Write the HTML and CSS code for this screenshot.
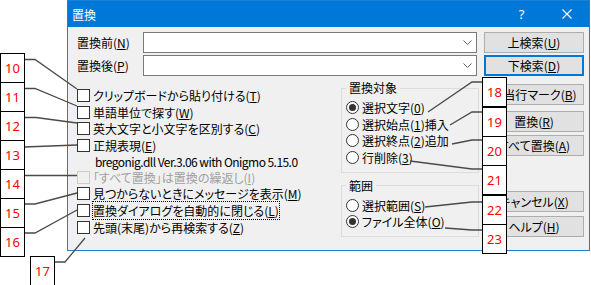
FILE: index.html
```html
<!DOCTYPE html>
<html lang="ja">
<head>
<meta charset="utf-8">
<title>置換</title>
<link rel="stylesheet" href="styles.css">
</head>
<body>
<div class="dialog">
  <div class="titlebar">
    <span class="title">置換</span>
    <span class="tb-help">?</span>
    <span class="tb-close"><svg width="10" height="10" viewBox="0 0 10 10"><path d="M0.5 0.5L9.5 9.5M9.5 0.5L0.5 9.5" stroke="#fff" stroke-width="1.1" fill="none"/></svg></span>
  </div>
  <div class="content">
    <div class="top">
      <span class="flabel">置換前(<u>N</u>)</span>
      <div class="combo"><svg class="chev" width="9" height="5" viewBox="0 0 9 5"><path d="M0.5 0.5L4.5 4.5L8.5 0.5" stroke="#606060" fill="none"/></svg></div>
      <button class="btn">上検索(<u>U</u>)</button>
      <span class="flabel">置換後(<u>P</u>)</span>
      <div class="combo"><svg class="chev" width="9" height="5" viewBox="0 0 9 5"><path d="M0.5 0.5L4.5 4.5L8.5 0.5" stroke="#606060" fill="none"/></svg></div>
      <button class="btn default">下検索(<u>D</u>)</button>
    </div>
    <div class="lower">
      <div class="checks">
        <div class="chk"><span class="box"></span>クリップボードから貼り付ける(<u>T</u>)</div>
        <div class="chk"><span class="box"></span>単語単位で探す(<u>W</u>)</div>
        <div class="chk"><span class="box"></span>英大文字と小文字を区別する(<u>C</u>)</div>
        <div class="chk"><span class="box"></span>正規表現(<u>E</u>)</div>
        <div class="info">bregonig.dll Ver.3.06 with Onigmo 5.15.0</div>
        <div class="chk disabled"><span class="box"></span>「すべて置換」は置換の繰返し(<u>I</u>)</div>
        <div class="chk"><span class="box"></span>見つからないときにメッセージを表示(<u>M</u>)</div>
        <div class="chk"><span class="box"></span><span class="focus">置換ダイアログを自動的に閉じる(<u>L</u>)</span></div>
        <div class="chk"><span class="box"></span>先頭(末尾)から再検索する(<u>Z</u>)</div>
      </div>
      <div class="groups">
        <fieldset class="group">
          <legend>置換対象</legend>
          <div class="rad"><span class="dot on"></span>選択文字(<u>0</u>)</div>
          <div class="rad"><span class="dot"></span>選択始点(<u>1</u>)挿入</div>
          <div class="rad"><span class="dot"></span>選択終点(<u>2</u>)追加</div>
          <div class="rad"><span class="dot"></span>行削除(<u>3</u>)</div>
        </fieldset>
        <fieldset class="group second">
          <legend>範囲</legend>
          <div class="rad"><span class="dot"></span>選択範囲(<u>S</u>)</div>
          <div class="rad"><span class="dot on"></span>ファイル全体(<u>O</u>)</div>
        </fieldset>
      </div>
      <div class="buttons">
        <button class="btn b-mark">該当行マーク(<u>B</u>)</button>
        <button class="btn b-rep">置換(<u>R</u>)</button>
        <button class="btn b-all">すべて置換(<u>A</u>)</button>
        <button class="btn b-cancel">キャンセル(<u>X</u>)</button>
        <button class="btn b-help">ヘルプ(<u>H</u>)</button>
      </div>
    </div>
  </div>
</div>

<div class="annot">
  <svg class="leaders" width="591" height="285" viewBox="0 0 591 285">
    <g stroke="#4a4a4a" stroke-width="1.3" fill="none">
      <polyline points="24,59.5 35,59.5 77,89"/>
      <polyline points="24,88.5 35,88.5 77,106"/>
      <polyline points="24,117.5 36,117.5 77,123"/>
      <polyline points="24,147 77,145"/>
      <polyline points="24,175.5 77,175.5"/>
      <polyline points="24,204 35,204 77,193"/>
      <polyline points="24,233 35,233 77,210"/>
      <polyline points="54,262 65,262 85,238"/>
      <polyline points="428,112 472,82 482,82"/>
      <polyline points="450,125 472,112 482,112"/>
      <polyline points="452,144 472,140 482,140"/>
      <polyline points="410,161 472,169 482,169"/>
      <polyline points="425,207 472,202 482,202"/>
      <polyline points="445,228 472,230 482,230"/>
    </g>
  </svg>
  <div class="tag t10">10</div>
  <div class="tag t11">11</div>
  <div class="tag t12">12</div>
  <div class="tag t13">13</div>
  <div class="tag t14">14</div>
  <div class="tag t15">15</div>
  <div class="tag t16">16</div>
  <div class="tag t17">17</div>
  <div class="tag t18">18</div>
  <div class="tag t19">19</div>
  <div class="tag t20">20</div>
  <div class="tag t21">21</div>
  <div class="tag t22">22</div>
  <div class="tag t23">23</div>
</div>
</body>
</html>
```

FILE: styles.css
```css
* { box-sizing: border-box; }

body {
  margin: 0;
  width: 591px;
  height: 285px;
  position: relative;
  overflow: hidden;
  background: #fff;
  color: #000;
  font-family: "Noto Sans CJK JP", "Noto Sans", sans-serif;
  font-size: 12px;
  font-feature-settings: "palt";
}

u { text-decoration: underline; text-underline-offset: 1px; }

.dialog {
  margin-left: 67px;
  width: 523px;
  height: 251px;
  border: 1px solid #1c7fd6;
  background: #f0f0f0;
}

.titlebar {
  height: 26px;
  background: #0078d7;
  color: #fff;
  display: flex;
  align-items: center;
}
.title { padding-left: 4px; flex: 1; }
.tb-help, .tb-close {
  width: 45px;
  display: flex;
  justify-content: center;
  align-items: center;
}
.tb-help { font-family: "Noto Sans", sans-serif; font-size: 13px; }

.content { padding: 5px 0 0 9px; }

.top {
  display: grid;
  grid-template-columns: 66px 334px 107px;
  grid-template-rows: 21px 21px;
  row-gap: 2px;
  align-items: center;
}
.top .btn { justify-self: end; }
.combo {
  height: 21px;
  border: 1px solid #7a7a7a;
  background: #fff;
  display: flex;
  justify-content: flex-end;
  align-items: center;
  padding-right: 4px;
}

.btn {
  font: inherit;
  color: #000;
  height: 21px;
  width: 100px;
  padding: 0;
  background: #e1e1e1;
  border: 1px solid #adadad;
  display: flex;
  justify-content: center;
  align-items: center;
}
.btn.default { border: 2px solid #0078d7; }

.lower { display: flex; align-items: flex-start; }

.checks { width: 264px; padding-top: 11px; }
.chk {
  height: 16.7px;
  display: flex;
  align-items: center;
  white-space: nowrap;
}
.box {
  width: 13px;
  height: 13px;
  border: 1px solid #333;
  background: #fff;
  margin-right: 3px;
  flex: none;
}
.chk.disabled { color: #a0a0a0; }
.chk.disabled .box { border-color: #cccccc; background: #f0f0f0; }
.focus { outline: 1px dotted #000; outline-offset: 0; }

.info {
  height: 15px;
  line-height: 15px;
  padding-left: 18px;
  white-space: nowrap;
  letter-spacing: -0.55px;
}

.groups { width: 138px; padding-top: 5px; }
.group {
  margin: 0;
  min-width: 0;
  border: 1px solid #dcdcdc;
  padding: 4px 4px 6px 4px;
}
.group legend {
  padding: 0 3px;
  line-height: 14px;
}
.group.second { margin-top: 6px; }
.rad {
  height: 16.7px;
  display: flex;
  align-items: center;
  white-space: nowrap;
}
.dot {
  width: 13px;
  height: 13px;
  border: 1px solid #333;
  border-radius: 50%;
  background: #fff;
  margin-right: 3px;
  flex: none;
  display: flex;
  justify-content: center;
  align-items: center;
}
.dot.on::after {
  content: "";
  width: 7px;
  height: 7px;
  border-radius: 50%;
  background: #333;
}

.buttons {
  margin-left: 5px;
  width: 100px;
  padding-top: 8px;
  display: flex;
  flex-direction: column;
}
.b-rep { margin-top: 6px; }
.b-all { margin-top: 3px; }
.b-cancel { margin-top: 35px; }
.b-help { margin-top: 4px; }

.annot { position: absolute; left: 0; top: 0; width: 591px; height: 285px; }
.leaders { position: absolute; left: 0; top: 0; }
.tag {
  position: absolute;
  width: 25px;
  height: 30px;
  border: 1px solid #000;
  background: #fff;
  color: #ff0000;
  font-family: "Noto Sans", sans-serif;
  font-size: 13px;
  display: flex;
  justify-content: center;
  align-items: center;
}
.t10 { left: 0; top: 53px; }
.t11 { left: 0; top: 82px; }
.t12 { left: 0; top: 111px; }
.t13 { left: 0; top: 140px; }
.t14 { left: 0; top: 169px; }
.t15 { left: 0; top: 198px; }
.t16 { left: 0; top: 227px; }
.t17 { left: 30px; top: 256px; }
.t18 { left: 482px; top: 77px; }
.t19 { left: 482px; top: 107px; }
.t20 { left: 482px; top: 136px; }
.t21 { left: 482px; top: 165px; }
.t22 { left: 482px; top: 195px; }
.t23 { left: 482px; top: 224px; }
```
